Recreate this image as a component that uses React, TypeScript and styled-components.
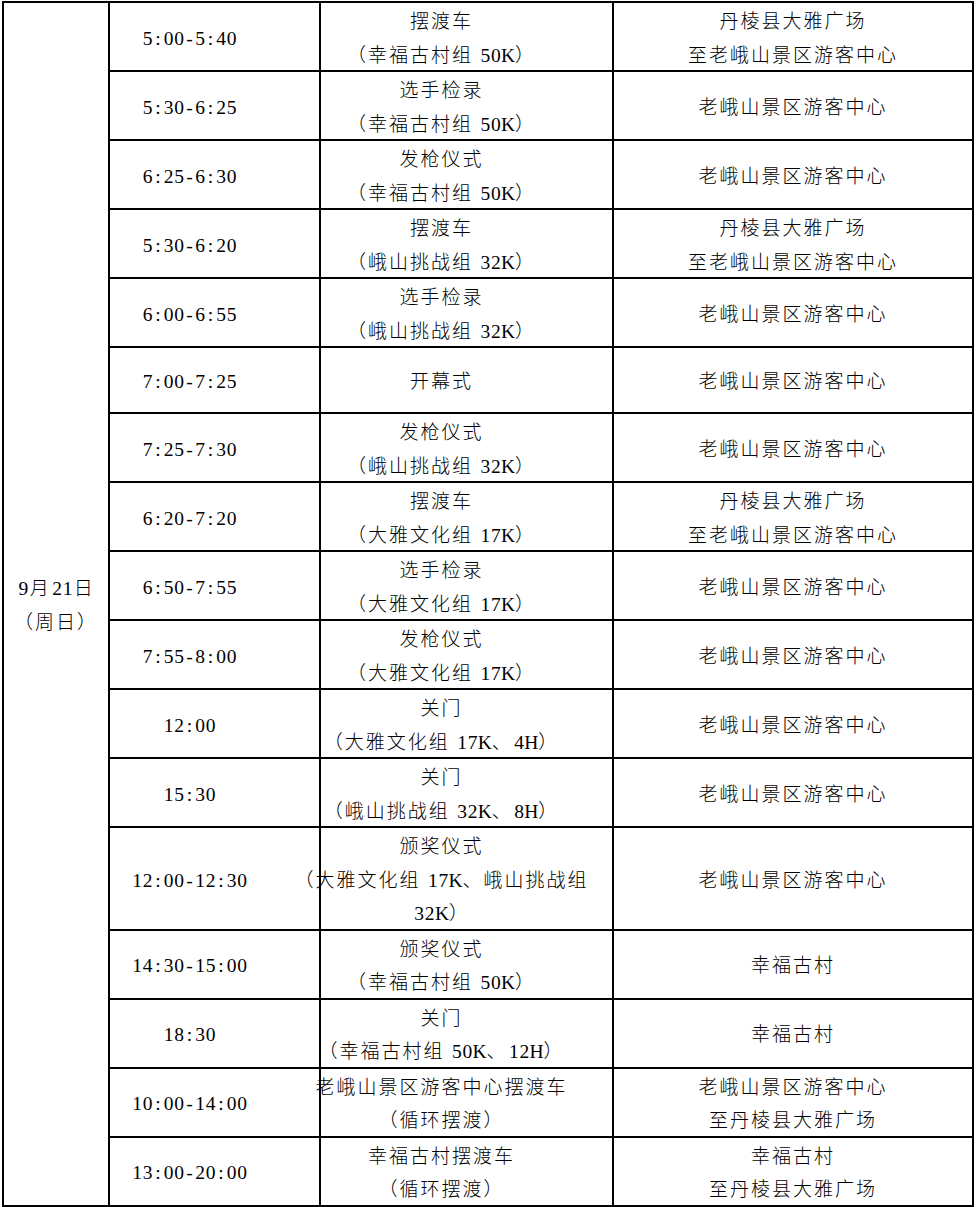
import React from 'react';
import styled, { createGlobalStyle } from 'styled-components';

interface Row {
  time: string;
  event: string[];
  place: string[];
}

const rows: Row[] = [
  { time: '5:00-5:40', event: ['摆渡车', '（幸福古村组 50K）'], place: ['丹棱县大雅广场', '至老峨山景区游客中心'] },
  { time: '5:30-6:25', event: ['选手检录', '（幸福古村组 50K）'], place: ['老峨山景区游客中心'] },
  { time: '6:25-6:30', event: ['发枪仪式', '（幸福古村组 50K）'], place: ['老峨山景区游客中心'] },
  { time: '5:30-6:20', event: ['摆渡车', '（峨山挑战组 32K）'], place: ['丹棱县大雅广场', '至老峨山景区游客中心'] },
  { time: '6:00-6:55', event: ['选手检录', '（峨山挑战组 32K）'], place: ['老峨山景区游客中心'] },
  { time: '7:00-7:25', event: ['开幕式'], place: ['老峨山景区游客中心'] },
  { time: '7:25-7:30', event: ['发枪仪式', '（峨山挑战组 32K）'], place: ['老峨山景区游客中心'] },
  { time: '6:20-7:20', event: ['摆渡车', '（大雅文化组 17K）'], place: ['丹棱县大雅广场', '至老峨山景区游客中心'] },
  { time: '6:50-7:55', event: ['选手检录', '（大雅文化组 17K）'], place: ['老峨山景区游客中心'] },
  { time: '7:55-8:00', event: ['发枪仪式', '（大雅文化组 17K）'], place: ['老峨山景区游客中心'] },
  { time: '12:00', event: ['关门', '（大雅文化组 17K、4H）'], place: ['老峨山景区游客中心'] },
  { time: '15:30', event: ['关门', '（峨山挑战组 32K、8H）'], place: ['老峨山景区游客中心'] },
  { time: '12:00-12:30', event: ['颁奖仪式', '（大雅文化组 17K、峨山挑战组', '32K）'], place: ['老峨山景区游客中心'] },
  { time: '14:30-15:00', event: ['颁奖仪式', '（幸福古村组 50K）'], place: ['幸福古村'] },
  { time: '18:30', event: ['关门', '（幸福古村组 50K、12H）'], place: ['幸福古村'] },
  { time: '10:00-14:00', event: ['老峨山景区游客中心摆渡车', '（循环摆渡）'], place: ['老峨山景区游客中心', '至丹棱县大雅广场'] },
  { time: '13:00-20:00', event: ['幸福古村摆渡车', '（循环摆渡）'], place: ['幸福古村', '至丹棱县大雅广场'] },
];

const GlobalStyle = createGlobalStyle`
  html, body {
    margin: 0;
    background: #fff;
  }
`;

const Page = styled.div`
  padding: 1px 0 0 2px;
`;

const Sheet = styled.div<{ $rows: number }>`
  display: grid;
  grid-template-columns: 104px 209px 291px 358px;
  grid-template-rows: repeat(${p => p.$rows}, minmax(64px, auto));
  gap: 2px;
  padding: 2px;
  width: max-content;
  background: #000;
  color: #000;
  font-family: "Noto Sans CJK SC", sans-serif;
  font-weight: 300;
  font-size: 19px;
  letter-spacing: 2px;
`;

// $shift: right-side inset, the source doc centres some columns off-middle
const Cell = styled.div<{ $shift?: number }>`
  background: #fff;
  display: flex;
  flex-direction: column;
  align-items: center;
  justify-content: center;
  text-align: center;
  white-space: nowrap;
  padding-right: ${p => p.$shift ?? 0}px;
`;

const Line = styled.div`
  height: 33.5px;
  line-height: 33.5px;
`;

const DateCell = styled(Cell)`
  grid-column: 1;
  grid-row: 1 / -1;
`;

const Latin = styled.span`
  margin: 0 1px;
  letter-spacing: 0;
`;

// SimSun style half-width latin: each char in a fixed cell
const Half = styled.span<{ $wide?: boolean }>`
  display: inline-block;
  width: ${p => (p.$wide ? 13 : 10.5)}px;
  text-align: center;
  font-family: "Liberation Serif", serif;
  font-size: 19.5px;
  line-height: 1;
`;

// wrap runs of latin letters and digits so they get the half-width font
const mix = (text: string) =>
  text.split(/([0-9A-Za-z:\-]+)/).map((part, i) =>
    i % 2 === 1 ? (
      <Latin key={i}>
        {part.split('').map((c, j) => (
          <Half key={j} $wide={/[A-Z]/.test(c)}>
            {c}
          </Half>
        ))}
      </Latin>
    ) : (
      part
    )
  );

const Lines: React.FC<{ lines: string[] }> = ({ lines }) => (
  <>
    {lines.map((l, i) => (
      <Line key={i}>{mix(l)}</Line>
    ))}
  </>
);

const App: React.FC = () => (
  <Page>
    <GlobalStyle />
    <Sheet $rows={rows.length}>
      <DateCell>
        <Line>{mix('9月21日')}</Line>
        <Line>（周日）</Line>
      </DateCell>
      {rows.map((r, i) => (
        <React.Fragment key={i}>
          <Cell $shift={50}>
            <Lines lines={[r.time]} />
          </Cell>
          <Cell $shift={50}>
            <Lines lines={r.event} />
          </Cell>
          <Cell>
            <Lines lines={r.place} />
          </Cell>
        </React.Fragment>
      ))}
    </Sheet>
  </Page>
);

export default App;
